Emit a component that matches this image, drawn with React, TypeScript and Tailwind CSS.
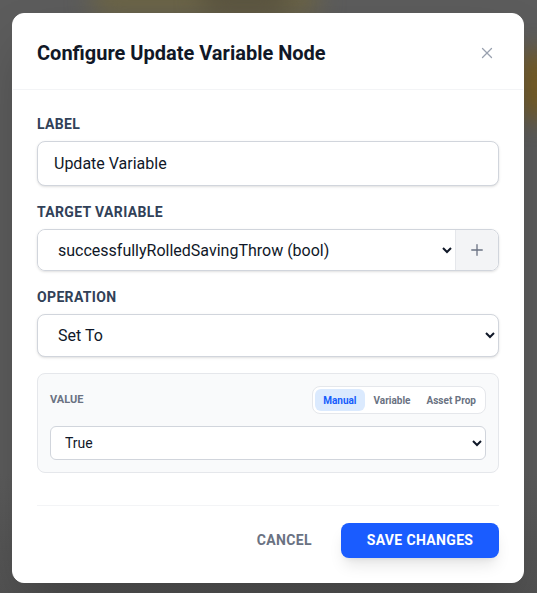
import { X, Plus } from "lucide-react";

const labelCls = "mb-[7px] block text-sm font-bold uppercase leading-5 tracking-wide text-slate-700";
const fieldCls =
  "w-full rounded-lg border border-gray-300 bg-white px-4 text-base text-gray-900 shadow-sm outline-none";

export default function App() {
  return (
    <div
      className="relative min-h-[593px] w-full overflow-hidden bg-[#5c5c5c] px-3 pt-[13px]"
      style={{ fontFamily: "Roboto, 'Noto Sans', Arial, sans-serif" }}
    >
      {/* blurred canvas behind the overlay */}
      <div className="absolute left-[90px] top-[-20px] h-[40px] w-[230px] rounded-full bg-[#6b6446] blur-md" />
      <div className="absolute left-[200px] top-[-20px] h-[36px] w-[90px] rounded-full bg-[#5a5440] blur-md" />
      <div className="absolute right-[-14px] top-[50px] h-[70px] w-[30px] rounded-full bg-[#7a5c1a] blur-md" />
      <div className="absolute inset-x-0 bottom-0 h-[120px] bg-gradient-to-b from-transparent to-[#525252]" />

      <div className="relative w-[512px] overflow-hidden rounded-xl border border-white bg-white shadow-2xl">
        <div className="flex items-center justify-between border-b border-gray-100 px-6 pb-[22px] pt-[25px]">
          <h2 className="text-xl font-bold leading-7 text-[#111827]">Configure Update Variable Node</h2>
          <button type="button" className="mr-[3px] text-gray-400">
            <X size={18} strokeWidth={1.75} />
          </button>
        </div>

        <div className="space-y-4 px-6 pt-6">
          <div>
            <label className={labelCls}>Label</label>
            <input className={`${fieldCls} h-[45px]`} defaultValue="Update Variable" />
          </div>

          <div>
            <label className={labelCls}>Target Variable</label>
            <div className="flex h-[42px] rounded-lg border border-gray-300 shadow-sm">
              <select className="h-full min-w-0 flex-1 rounded-l-lg border-r border-gray-200 bg-white px-4 text-base text-gray-900 outline-none">
                <option>successfullyRolledSavingThrow (bool)</option>
              </select>
              <button
                type="button"
                className="flex w-[42px] items-center justify-center rounded-r-lg bg-gray-100 text-gray-500"
              >
                <Plus size={18} strokeWidth={1.75} />
              </button>
            </div>
          </div>

          <div>
            <label className={labelCls}>Operation</label>
            <select className={`${fieldCls} h-[43px]`}>
              <option>Set To</option>
            </select>
          </div>

          <div className="rounded-lg border border-gray-200 bg-gray-50 p-3">
            <div className="mb-3 flex items-center justify-between">
              <span className="text-[11px] font-bold uppercase text-gray-500">Value</span>
              <div className="flex h-[28px] items-center gap-0.5 rounded-lg border border-gray-200 bg-white p-0.5 text-[10px] font-bold">
                <button type="button" className="h-full rounded-md bg-blue-100 px-2 text-blue-600">
                  Manual
                </button>
                <button type="button" className="h-full rounded-md px-[7px] text-gray-500">
                  Variable
                </button>
                <button type="button" className="h-full rounded-md px-[7px] text-gray-500">
                  Asset Prop
                </button>
              </div>
            </div>
            <select className="h-[34px] w-full rounded-md border border-gray-300 bg-white px-2.5 text-sm text-gray-900 outline-none">
              <option>True</option>
            </select>
          </div>
        </div>

        <div className="mx-6 mt-8 flex items-center justify-end gap-[13px] border-t border-gray-100 pb-6 pt-4">
          <button type="button" className="px-4 py-2 text-sm font-bold uppercase tracking-wide text-gray-500">
            Cancel
          </button>
          <button
            type="button"
            className="h-[35px] w-[158px] rounded-lg bg-[#1a5cff] text-sm font-bold uppercase tracking-wide text-white shadow-lg"
          >
            Save Changes
          </button>
        </div>
      </div>
    </div>
  );
}
